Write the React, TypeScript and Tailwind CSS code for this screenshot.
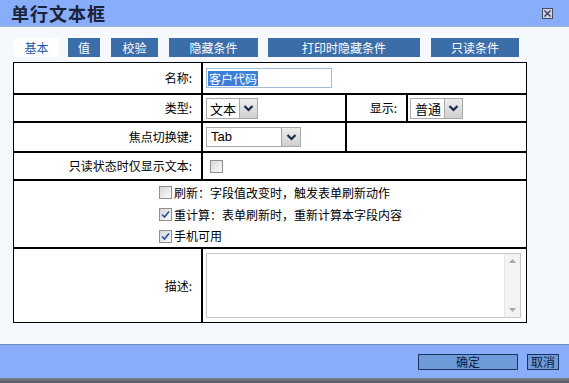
import React from "react";

function Chevron() {
  return (
    <svg width="11" height="8" viewBox="0 0 11 8">
      <path d="M1.5 2 L5.5 6 L9.5 2" fill="none" stroke="#1b2a4a" strokeWidth="2.2" />
    </svg>
  );
}

function Check({ checked }: { checked?: boolean }) {
  return (
    <div className="w-[13px] h-[13px] border border-[#8e8f8f] bg-gradient-to-br from-[#d6d6d6] to-[#fbfbfb] flex items-center justify-center shrink-0">
      {checked ? (
        <svg width="9" height="9" viewBox="0 0 9 9">
          <path d="M1 4.5 L3.5 7 L8 1.5" fill="none" stroke="#2a4f9e" strokeWidth="1.6" />
        </svg>
      ) : null}
    </div>
  );
}

export default function App() {
  return (
    <div className="w-[569px] h-[383px] flex flex-col bg-[#f5f8fc] font-['Noto_Sans_CJK_SC','Noto_Sans',sans-serif] text-black overflow-hidden">
      {/* Title bar */}
      <div className="h-[27px] shrink-0 bg-[#88aefa] border-b border-[#9fb0c8] flex items-center justify-between pl-[11px] pr-[16px]">
        <span className="text-[18px] font-bold leading-none tracking-[1px] text-[#1a2238]">单行文本框</span>
        <div className="w-[11px] h-[11px] border border-[#4a4a5a] bg-[#c8d4ee] flex items-center justify-center">
          <svg width="9" height="9" viewBox="0 0 9 9">
            <path d="M1.5 1.5 L7.5 7.5 M7.5 1.5 L1.5 7.5" stroke="#3a3a4a" strokeWidth="1.3" />
          </svg>
        </div>
      </div>

      {/* Body */}
      <div className="flex-1 flex flex-col pt-[11px] pl-[13px]">
        {/* Tabs */}
        <div className="flex h-[19px] text-[12px] leading-[19px] text-white">
          <div className="w-[45px] ml-[1px] bg-white text-[#2a58a8] text-center">基本</div>
          <div className="w-[32px] ml-[9px] bg-[#3b6ea8] text-center">值</div>
          <div className="w-[47px] ml-[11px] bg-[#3b6ea8] text-center">校验</div>
          <div className="w-[89px] ml-[11px] bg-[#3b6ea8] text-center">隐藏条件</div>
          <div className="w-[152px] ml-[10px] bg-[#3b6ea8] text-center">打印时隐藏条件</div>
          <div className="w-[88px] ml-[11px] bg-[#3b6ea8] text-center">只读条件</div>
        </div>

        {/* Table */}
        <div className="mt-[5px] w-[514px] border border-black bg-white text-[12px] flex flex-col">
          {/* Row 1 */}
          <div className="flex h-[32px] border-b-2 border-black">
            <div className="w-[189px] border-r-2 border-black flex items-center justify-end pr-[9px]">名称:</div>
            <div className="flex-1 flex items-center pl-[3px]">
              <div className="w-[126px] h-[20px] border border-[#9fbcd8] bg-white flex items-center pl-[1px]">
                <span className="bg-[#3c7fd6] text-white text-[12px] leading-[15px] px-[1px]">客户代码</span>
              </div>
            </div>
          </div>
          {/* Row 2 */}
          <div className="flex h-[28px] border-b-2 border-black">
            <div className="w-[189px] border-r-2 border-black flex items-center justify-end pr-[9px]">类型:</div>
            <div className="w-[144px] border-r-2 border-black flex items-center pl-[3px]">
              <div className="w-[52px] h-[21px] border border-[#a9a9a9] bg-white flex">
                <span className="flex-1 text-[13px] leading-[19px] pl-[3px]">文本</span>
                <div className="w-[18px] bg-gradient-to-b from-[#eeeeee] to-[#cfcfcf] border-l border-[#a9a9a9] flex items-center justify-center">
                  <Chevron />
                </div>
              </div>
            </div>
            <div className="w-[61px] border-r-2 border-black flex items-center justify-end pr-[9px]">显示:</div>
            <div className="flex-1 flex items-center pl-[2px]">
              <div className="w-[53px] h-[21px] border border-[#a9a9a9] bg-white flex">
                <span className="flex-1 text-[13px] leading-[19px] pl-[4px]">普通</span>
                <div className="w-[18px] bg-gradient-to-b from-[#eeeeee] to-[#cfcfcf] border-l border-[#a9a9a9] flex items-center justify-center">
                  <Chevron />
                </div>
              </div>
            </div>
          </div>
          {/* Row 3 */}
          <div className="flex h-[30px] border-b-2 border-black">
            <div className="w-[189px] border-r-2 border-black flex items-center justify-end pr-[9px]">焦点切换键:</div>
            <div className="w-[144px] border-r-2 border-black flex items-center pl-[3px]">
              <div className="w-[95px] h-[20px] border border-[#a9a9a9] bg-white flex">
                <span className="flex-1 text-[13px] leading-[18px] pl-[4px] font-['Liberation_Sans',sans-serif]">Tab</span>
                <div className="w-[19px] bg-gradient-to-b from-[#eeeeee] to-[#cfcfcf] border-l border-[#a9a9a9] flex items-center justify-center">
                  <Chevron />
                </div>
              </div>
            </div>
            <div className="flex-1" />
          </div>
          {/* Row 4 */}
          <div className="flex h-[28px] border-b-2 border-black">
            <div className="w-[189px] border-r-2 border-black flex items-center justify-end pr-[9px]">只读状态时仅显示文本:</div>
            <div className="flex-1 flex items-center pl-[7px]">
              <Check />
            </div>
          </div>
          {/* Row 5 */}
          <div className="flex flex-col h-[68px] border-b-2 border-black pl-[145px] pt-[1px]">
            <div className="flex items-center gap-[2px] h-[22px]">
              <Check />
              <span>刷新：字段值改变时，触发表单刷新动作</span>
            </div>
            <div className="flex items-center gap-[2px] h-[22px]">
              <Check checked />
              <span>重计算：表单刷新时，重新计算本字段内容</span>
            </div>
            <div className="flex items-center gap-[2px] h-[22px]">
              <Check checked />
              <span>手机可用</span>
            </div>
          </div>
          {/* Row 6 */}
          <div className="flex h-[73px]">
            <div className="w-[189px] border-r-2 border-black flex items-center justify-end pr-[9px]">描述:</div>
            <div className="flex-1 flex items-center pl-[3px]">
              <div className="w-[315px] h-[65px] border border-[#c8c8c8] bg-white flex justify-end">
                <div className="w-[16px] bg-[#f3f3f3] border-l border-[#e6e6e6] flex flex-col items-center justify-between py-[5px]">
                  <svg width="7" height="4" viewBox="0 0 7 4"><path d="M0 4 L3.5 0 L7 4 Z" fill="#a8a8a8" /></svg>
                  <svg width="7" height="4" viewBox="0 0 7 4"><path d="M0 0 L3.5 4 L7 0 Z" fill="#a8a8a8" /></svg>
                </div>
              </div>
            </div>
          </div>
        </div>
      </div>

      {/* Footer */}
      <div className="h-[34px] shrink-0 bg-[#88aefa] border-t border-[#6f8fc4] flex items-center justify-end pr-[10px] text-[12px]">
        <div className="w-[100px] h-[16px] bg-[#6f9ad9] border border-[#1c3461] text-center leading-[14px] text-[#0d1b3a]">确定</div>
        <div className="w-[32px] h-[16px] ml-[9px] bg-[#6f9ad9] border border-[#1c3461] text-center leading-[14px] text-[#0d1b3a]">取消</div>
      </div>
      <div className="h-[5px] shrink-0 bg-gradient-to-b from-[#7a7f8a] to-[#55575c]" />
    </div>
  );
}
